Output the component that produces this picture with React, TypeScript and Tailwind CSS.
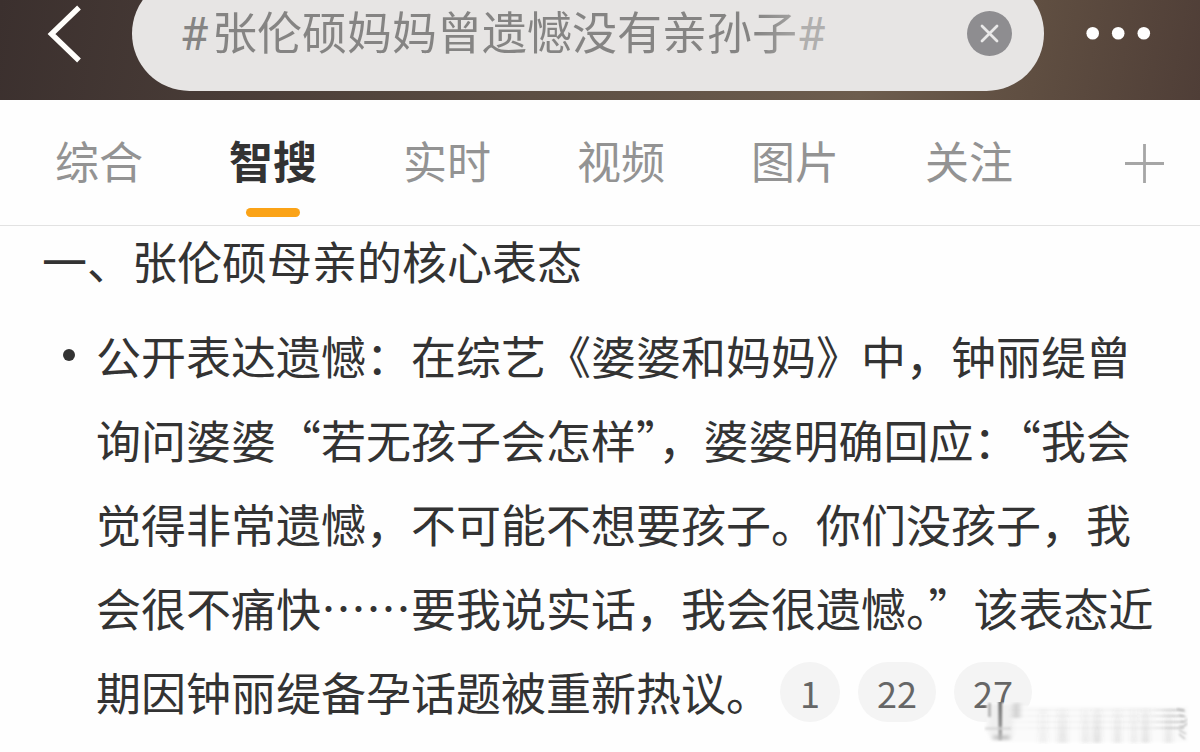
const tabs = ['综合', '智搜', '实时', '视频', '图片', '关注'];

const lines = [
  '公开表达遗憾：在综艺《婆婆和妈妈》中，钟丽缇曾',
  '询问婆婆“若无孩子会怎样”，婆婆明确回应：“我会',
  '觉得非常遗憾，不可能不想要孩子。你们没孩子，我',
  '会很不痛快……要我说实话，我会很遗憾。”该表态近',
];

const streaks = [
  { x: 55, w: 8, o: 0.07 },
  { x: 74, w: 9, o: 0.12 },
  { x: 98, w: 7, o: 0.1 },
  { x: 109, w: 8, o: 0.15 },
  { x: 130, w: 7, o: 0.12 },
  { x: 147, w: 6, o: 0.1 },
  { x: 158, w: 7, o: 0.14 },
  { x: 181, w: 7, o: 0.12 },
];

function Header() {
  return (
    <header className="flex h-[100px] shrink-0 items-start bg-[linear-gradient(100deg,#3b302e_0%,#493c37_20%,#5c4e43_45%,#6d5d4e_72%,#5f4e41_86%,#4f3e37_100%)]">
      <svg className="mt-1 ml-[44px] h-[60px] w-[40px] shrink-0" viewBox="0 0 40 60" fill="none" stroke="#fffefb" strokeWidth="5.4">
        <path d="M35 3.5 7.5 30 35 56.5" />
      </svg>
      <div className="-mt-[24px] ml-[48px] flex h-[115px] w-[912px] shrink-0 items-center rounded-full bg-[#e7e5e4] pr-8 pl-[48px]">
        <div className="flex text-[45px] leading-[60px] whitespace-nowrap text-[#858483]">
          <span className="mt-px w-[32px] font-[Roboto] text-[46px]">#</span>
          <span className="-mt-[2px] bg-[linear-gradient(90deg,#858483_0%,#858483_93%,#a5a4a3_100%)] bg-clip-text text-transparent">
            张伦硕妈妈曾遗憾没有亲孙子
          </span>
          <span className="mt-px font-[Roboto] text-[46px] text-[#b0afae]">#</span>
        </div>
        <svg className="ml-auto size-[45px] shrink-0" viewBox="0 0 45 45">
          <circle cx="22.5" cy="22.5" r="22.5" fill="#8e8d90" />
          <path d="m15 15 15 15m0-15L15 30" stroke="#e9e8e8" strokeWidth="2.8" strokeLinecap="round" />
        </svg>
      </div>
      <svg className="mt-[26px] ml-[42px] h-[14px] w-[66px] shrink-0" viewBox="0 0 66 14" fill="#fff">
        <circle cx="6.7" cy="7.3" r="6.3" />
        <circle cx="32.2" cy="7.3" r="6.3" />
        <circle cx="57.8" cy="7.3" r="6.3" />
      </svg>
    </header>
  );
}

function TabBar() {
  return (
    <nav className="flex h-[126px] shrink-0 border-b border-[#e2e2e2] pl-3">
      {tabs.map((tab) => (
        <div key={tab} className="flex w-[174px] shrink-0 flex-col items-center pt-[27px]">
          <span
            className={
              tab === '智搜'
                ? 'text-[44px] leading-[66px] font-bold text-[#333]'
                : 'text-[44px] leading-[66px] text-[#939393]'
            }
          >
            {tab}
          </span>
          {tab === '智搜' && <span className="mt-[15px] h-[9px] w-[54px] rounded-full bg-[#fba317]" />}
        </div>
      ))}
      <svg className="mt-[44px] ml-[69px] h-[40px] w-[40px] shrink-0" viewBox="0 0 40 40" fill="none" stroke="#a6a6a6" strokeWidth="2.8">
        <path d="M0 19.5h39M19.5 0v39" />
      </svg>
    </nav>
  );
}

function Smear() {
  return (
    <svg className="absolute top-[702px] left-[984px] h-[42px] w-[208px]" viewBox="0 0 208 42">
      <defs>
        <filter id="soft" x="-20%" y="-20%" width="140%" height="140%">
          <feGaussianBlur stdDeviation="2.4 1.5" />
        </filter>
        <filter id="edge" x="-5%" y="-20%" width="110%" height="140%">
          <feGaussianBlur stdDeviation="0.8" />
        </filter>
        <linearGradient id="fade" x1="0" x2="0" y1="0" y2="1">
          <stop offset="0" stopColor="#555" stopOpacity=".3" />
          <stop offset="1" stopColor="#555" stopOpacity=".9" />
        </linearGradient>
        <linearGradient id="stem" x1="0" x2="0" y1="0" y2="1">
          <stop offset="0" stopColor="#666" />
          <stop offset=".6" stopColor="#888" />
          <stop offset="1" stopColor="#bbb" />
        </linearGradient>
        <linearGradient id="tail" x1="0" x2="1">
          <stop offset="0" stopColor="#777" stopOpacity="0.04" />
          <stop offset=".8" stopColor="#777" stopOpacity="0.08" />
          <stop offset="1" stopColor="#777" stopOpacity=".4" />
        </linearGradient>
      </defs>
      <path d="M3 1H32L34 4H204V40H10Q2 33 3 20Z" fill="#fbfbfb" filter="url(#edge)" />
      <g filter="url(#soft)">
        <path d="M5 2h24v30q-4 6-15 6Q3 34 4 22Z" fill="#efefef" />
        <rect x="29" y="1" width="7" height="15" fill="#d2d2d2" />
        <rect x="9" y="33" width="17" height="5" fill="#cacaca" />
        {streaks.map((s) => (
          <rect key={s.x} x={s.x} y="7" width={s.w} height="34" fill="url(#fade)" opacity={s.o * 1.2} />
        ))}
      </g>
      <g filter="url(#edge)">
        <rect x="4" y="1" width="3" height="14" fill="#b5b5b5" />
        <rect x="14.500" y="-2" width="3.500" height="40" fill="url(#stem)" />
        <rect x="1" y="25.500" width="26" height="2" fill="#d4d4d4" />
      </g>
      <g fill="url(#tail)" filter="url(#edge)">
        {[7, 13, 19, 25].map((y) => (
          <rect key={y} x="26" y={y} width="174" height="2" />
        ))}
      </g>
      <path
        d="m193 7 8 2m-6 4 7 2m-5 4q4 2 6-2m-8 7q5 2 8-3m-8 7 7 4m-7 0 6 5"
        stroke="#b5b5b5"
        strokeWidth="1.3"
        fill="none"
        filter="url(#edge)"
      />
    </svg>
  );
}

export default function App() {
  return (
    <div
      lang="zh-CN"
      className="relative flex h-[752px] w-[1200px] flex-col overflow-hidden bg-[#fefefe] font-['Noto_Sans_CJK_SC',sans-serif] text-[#333]"
    >
      <Header />
      <TabBar />
      <main className="flex flex-col pl-[42px] text-[45px] whitespace-nowrap">
        <h1 className="mt-px leading-[68px] font-normal">一、张伦硕母亲的核心表态</h1>
        <div className="mt-[19px] flex">
          <span className="mt-[35px] ml-[21px] size-[12px] shrink-0 rounded-full bg-[#333]" />
          <div className="ml-[21px] leading-[84px]">
            {lines.map((line) => (
              <p key={line}>{line}</p>
            ))}
            <div className="flex items-center">
              <span>期因钟丽缇备孕话题被重新热议。</span>
              <div className="ml-[9px] flex gap-[18px] text-[36px] leading-[60px] text-[#666]">
                <span className="h-[60px] w-[60px] rounded-full bg-[#f4f4f4] text-center">1</span>
                <span className="h-[60px] w-[78px] rounded-full bg-[#f4f4f4] text-center">22</span>
                <span className="h-[60px] w-[78px] rounded-full bg-[#f4f4f4] text-center">27</span>
              </div>
            </div>
          </div>
        </div>
      </main>
      <Smear />
    </div>
  );
}
